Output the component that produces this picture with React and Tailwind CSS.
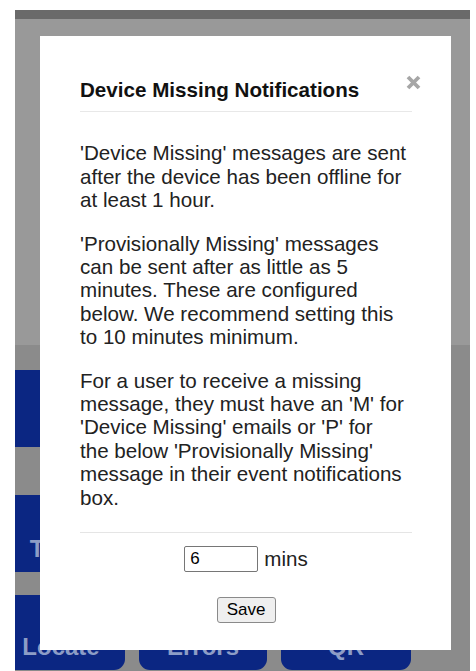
import React, { useState } from 'react';

// Bottom nav tiles sitting behind the dimmed overlay
const tileRows = [
  { h: 'h-[77px]', mt: 'mt-0', labels: ['', '', ''] },
  { h: 'h-[77px]', mt: 'mt-[48px]', labels: ['Track', '', ''] },
  { h: 'h-[75px]', mt: 'mt-[23px]', labels: ['Locate', 'Errors', 'QR'] },
];

// Help text, broken the way the dialog lays it out
const helpText = [
  [
    "'Device Missing' messages are sent",
    'after the device has been offline for',
    'at least 1 hour.',
  ],
  [
    "'Provisionally Missing' messages",
    'can be sent after as little as 5',
    'minutes. These are configured',
    'below. We recommend setting this',
    'to 10 minutes minimum.',
  ],
  [
    'For a user to receive a missing',
    "message, they must have an 'M' for",
    "'Device Missing' emails or 'P' for",
    "the below 'Provisionally Missing'",
    'message in their event notifications',
    'box.',
  ],
];

const CloseIcon = () => (
  <svg width="15" height="15" viewBox="0 0 15 15" fill="none">
    <path d="M2 2L13 13M13 2L2 13" stroke="#a6a6a6" strokeWidth="3.8" />
  </svg>
);

const App = () => {
  const [mins, setMins] = useState('6');

  return (
    <div className="h-[671px] w-[476px] bg-white pt-[10px] pl-[15px] pr-[6px] font-['Liberation_Sans',Arial,sans-serif]">
      <div className="relative h-full overflow-hidden bg-[#999999]">
        {/* Header bar */}
        <div className="h-[9px] bg-[#6a6a6a]"></div>
        <div className="h-[326px]"></div>

        {/* Tile grid */}
        <div className="h-full bg-[#8b8b8b] pt-[25px]">
          {tileRows.map((row, i) => (
            <div key={i} className={`-ml-[18px] grid grid-cols-[128px_128px_130px] gap-x-[14px] ${row.mt}`}>
              {row.labels.map((label, j) => (
                <div
                  key={j}
                  className={`flex items-end justify-center rounded-[11px] bg-[#0b2682] pb-[11px] ${row.h}`}
                >
                  <span className="text-[24px] font-bold leading-[24px] text-[#8d9dc6]">{label}</span>
                </div>
              ))}
            </div>
          ))}
        </div>

        {/* Modal */}
        <div className="absolute left-[25px] top-[26px] w-[411px] bg-white pl-[40px] pr-[39px] pt-[42px] pb-[27px]">
          <button className="absolute right-[30px] top-[39px]">
            <CloseIcon />
          </button>

          <h2 className="border-b border-[#e8e8e8] pb-[10px] text-[20.6px] font-bold leading-[23.4px] text-[#111111]">
            Device Missing Notifications
          </h2>

          <div className="mt-[29px] space-y-[20px] whitespace-nowrap text-[20.6px] leading-[23.4px] text-[#222222]">
            {helpText.map((lines, i) => (
              <p key={i}>
                {lines.map((line, j) => (
                  <span key={j} className="block">
                    {line}
                  </span>
                ))}
              </p>
            ))}
          </div>

          <div className="mt-[23px] border-t border-[#e5e5e5]"></div>

          <div className="mt-[13px] flex items-center justify-center gap-[6px]">
            <input
              type="text"
              value={mins}
              onChange={(e) => setMins(e.target.value)}
              className="h-[26px] w-[74px] rounded-[2px] border border-[#767676] px-[5px] text-[17px] text-black outline-none"
            />
            <span className="text-[20.6px] leading-[23.4px] text-[#222222]">mins</span>
          </div>

          <div className="mt-[25px] flex justify-center">
            <button className="h-[26px] w-[59px] rounded-[3px] border border-[#8a8a8a] bg-[#efefef] text-[17px] leading-[20px] text-black">
              Save
            </button>
          </div>
        </div>
      </div>
    </div>
  );
};

export default App;
